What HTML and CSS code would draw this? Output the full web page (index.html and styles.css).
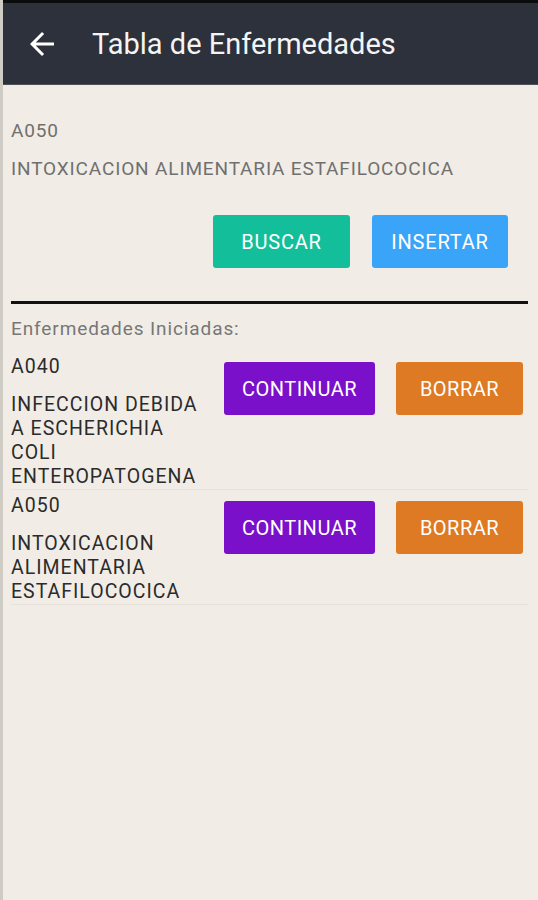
FILE: index.html
```html
<!DOCTYPE html>
<html lang="es">
<head>
  <meta charset="UTF-8" />
  <title>Tabla de Enfermedades</title>
  <link rel="stylesheet" href="styles.css">
</head>
<body>

  <header class="toolbar">
    <button class="back" aria-label="Volver">
      <svg viewBox="0 0 24 24" width="36" height="36"><path d="M20 11H7.83l5.59-5.59L12 4l-8 8 8 8 1.41-1.41L7.83 13H20v-2z" fill="#fff"/></svg>
    </button>
    <h1>Tabla de Enfermedades</h1>
  </header>

  <main>
    <section class="search">
      <p class="code">A050</p>
      <p class="name">INTOXICACION ALIMENTARIA ESTAFILOCOCICA</p>
      <div class="actions">
        <button class="btn buscar">BUSCAR</button>
        <button class="btn insertar">INSERTAR</button>
      </div>
    </section>

    <hr class="divider">

    <p class="subtitle">Enfermedades Iniciadas:</p>

    <ul class="started">
      <li class="row">
        <div class="info">
          <p class="code">A040</p>
          <p class="name">INFECCION DEBIDA A ESCHERICHIA COLI ENTEROPATOGENA</p>
        </div>
        <button class="btn continuar">CONTINUAR</button>
        <button class="btn borrar">BORRAR</button>
      </li>
      <li class="row">
        <div class="info">
          <p class="code">A050</p>
          <p class="name">INTOXICACION ALIMENTARIA ESTAFILOCOCICA</p>
        </div>
        <button class="btn continuar">CONTINUAR</button>
        <button class="btn borrar">BORRAR</button>
      </li>
    </ul>
  </main>

</body>
</html>
```

FILE: styles.css
```css
body {
  margin: 0;
  min-height: 900px;
  background-color: #f1ede6;
  border-left: 3px solid #cfcbc5;
  font-family: Roboto, 'Liberation Sans', sans-serif;
  color: #333;
}

p {
  margin: 0;
}

.toolbar {
  display: flex;
  align-items: center;
  height: 81px;
  border-top: 3px solid #0b0c0e;
  border-bottom: 1px solid #4a4f59;
  background-color: #2c313b;
  padding-left: 21px;
}

.back {
  display: flex;
  padding: 0;
  border: none;
  background: none;
  cursor: pointer;
}

.toolbar h1 {
  margin: 0 0 0 32px;
  font-size: 29px;
  font-weight: 400;
  color: #f4f4f4;
}

main {
  padding: 0 10px 0 8px;
}

.code,
.name {
  font-size: 19px;
  line-height: 24px;
  letter-spacing: 0.85px;
}

.search {
  padding-top: 34px;
  color: #707070;
}

.search .name {
  margin-top: 14px;
}

.actions {
  display: flex;
  justify-content: flex-end;
  gap: 22px;
  margin-top: 34px;
  padding-right: 20px;
}

.btn {
  height: 53px;
  border: none;
  border-radius: 3px;
  color: white;
  font-family: inherit;
  font-size: 20px;
  letter-spacing: 0.8px;
  cursor: pointer;
}

.buscar {
  width: 137px;
  background-color: #13bf9b;
}

.insertar {
  width: 136px;
  background-color: #3aa5f8;
}

.divider {
  margin: 33px 0 0;
  border: none;
  height: 3px;
  background-color: #111;
}

.subtitle {
  margin-top: 13px;
  font-size: 19px;
  line-height: 24px;
  letter-spacing: 0.9px;
  color: #777;
}

.started {
  list-style: none;
  margin: 10px 0 0;
  padding: 0;
}

.row {
  display: flex;
  align-items: flex-start;
  padding-top: 4px;
  border-bottom: 1px solid #e7e3dc;
  color: #2b2b2b;
}

.info {
  width: 196px;
  margin-right: 17px;
}

.info .code,
.info .name {
  font-size: 19.5px;
  letter-spacing: 1px;
}

.info .name {
  margin-top: 14px;
}

.row .btn {
  margin-top: 7px;
  letter-spacing: 0.5px;
}

.continuar {
  width: 151px;
  margin-right: 21px;
  background-color: #7a10ca;
}

.borrar {
  width: 127px;
  background-color: #dd7a23;
}
```
